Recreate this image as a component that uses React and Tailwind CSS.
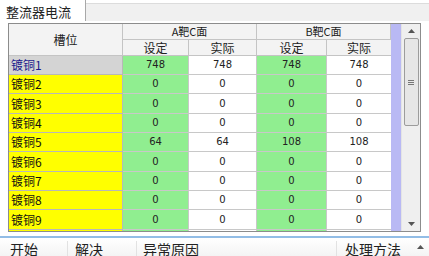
import React from "react";

const rows = [
  { name: "镀铜1", v: ["748", "748", "748", "748"], sel: true, h: "h-[19px]" },
  { name: "镀铜2", v: ["0", "0", "0", "0"], h: "h-[19px]" },
  { name: "镀铜3", v: ["0", "0", "0", "0"], h: "h-[20px]" },
  { name: "镀铜4", v: ["0", "0", "0", "0"], h: "h-[19px]" },
  { name: "镀铜5", v: ["64", "64", "108", "108"], h: "h-[19px]" },
  { name: "镀铜6", v: ["0", "0", "0", "0"], h: "h-[20px]" },
  { name: "镀铜7", v: ["0", "0", "0", "0"], h: "h-[19px]" },
  { name: "镀铜8", v: ["0", "0", "0", "0"], h: "h-[19px]" },
  { name: "镀铜9", v: ["0", "0", "0", "0"], h: "h-[20px]" },
  { name: "", v: ["", "", "", ""], h: "h-[19px]" },
];

const widths = ["w-[66px]", "w-[68px]", "w-[70px]", "w-[64px]"];
const font = { fontFamily: '"DejaVu Sans", "Noto Sans CJK SC", sans-serif' };

export default function App() {
  return (
    <div
      className="w-[429px] h-[256px] bg-white overflow-hidden text-[#222]"
      style={{ fontFamily: '"Noto Sans CJK SC", "DejaVu Sans", sans-serif' }}
    >
      {/* tab strip */}
      <div className="flex h-[21px]">
        <div className="w-[86px] pt-[1px] bg-white border-r border-[#a8a8a8] flex items-center pl-[6px] text-[13px] leading-none">
          整流器电流
        </div>
        <div className="flex-1 mt-[3px] bg-[#f0f0f0] border-t border-[#dcdcdc]" />
      </div>

      {/* table */}
      <div className="ml-[8px] mt-[2px] w-[413px] h-[209px] border border-[#8c8c8c] flex overflow-hidden">
        <div className="flex flex-col w-[382px]">
          {/* header */}
          <div className="flex h-[32px] bg-[#f3f3f3] text-[12px] leading-none">
            <div className="w-[114px] border-r border-b border-[#c4c4c4] flex items-center justify-center">
              槽位
            </div>
            <div className="flex flex-col">
              <div className="flex">
                <div className="w-[134px] h-[16px] border-r border-b border-[#c4c4c4] flex items-center justify-center text-[11px]">
                  A靶C面
                </div>
                <div className="w-[134px] h-[16px] border-r border-b border-[#c4c4c4] flex items-center justify-center text-[11px]">
                  B靶C面
                </div>
              </div>
              <div className="flex">
                {["设定", "实际", "设定", "实际"].map((t, i) => (
                  <div
                    key={i}
                    className={`${widths[i]} h-[16px] border-r border-b border-[#c4c4c4] flex items-center justify-center ${i === 3 ? "border-r-0" : ""}`}
                  >
                    {t}
                  </div>
                ))}
              </div>
            </div>
          </div>
          {/* body */}
          <div className="flex-1 overflow-hidden">
            {rows.map((r, ri) => (
              <div key={ri} className={`flex ${r.h}`}>
                <div
                  className={`w-[114px] border-r border-b border-[#b8b8b8] flex items-center pl-[2px] text-[12px] leading-none ${
                    r.sel ? "bg-[#d4d4d4] text-[#1a1a8c]" : "bg-[#ffff00] text-[#111]"
                  }`}
                >
                  {r.name}
                </div>
                {r.v.map((v, i) => (
                  <div
                    key={i}
                    className={`${widths[i]} border-r border-b border-[#c8c8c8] flex items-center justify-center text-[10px] leading-none ${
                      i % 2 === 0 ? "bg-[#90ee90]" : "bg-white"
                    } ${i === 3 ? "border-r-0" : ""}`}
                    style={font}
                  >
                    {v}
                  </div>
                ))}
              </div>
            ))}
          </div>
        </div>
        {/* lavender column */}
        <div className="w-[10px] bg-[#b9b9f4]" />
        {/* scrollbar */}
        <div className="w-[19px] bg-[#efefef] flex flex-col items-center border-l border-[#e4e4e4]">
          <div className="h-[14px] flex items-center justify-center">
            <svg width="7" height="4" viewBox="0 0 7 4">
              <path d="M3.5 0 L7 4 L0 4 Z" fill="#555" />
            </svg>
          </div>
          <div className="w-[15px] h-[88px] rounded-[2px] border border-[#9c9c9c] bg-[#e6e6e6] flex items-center justify-center">
            <div className="flex flex-col gap-[1px]">
              <div className="w-[6px] h-[1px] bg-[#777]" />
              <div className="w-[6px] h-[1px] bg-[#777]" />
              <div className="w-[6px] h-[1px] bg-[#777]" />
            </div>
          </div>
          <div className="flex-1" />
          <div className="h-[14px] flex items-center justify-center">
            <svg width="7" height="4" viewBox="0 0 7 4">
              <path d="M0 0 L7 0 L3.5 4 Z" fill="#555" />
            </svg>
          </div>
        </div>
      </div>

      {/* bottom grid header */}
      <div className="mt-[4px] h-[2px] bg-[#92bde6]" />
      <div className="flex h-[18px] bg-gradient-to-b from-white to-[#f4f4f4] text-[14px] leading-[16px] pt-[3px] overflow-hidden whitespace-nowrap">
        <div className="w-[68px] pl-[10px] border-r border-[#e2e2e2] overflow-hidden">开始</div>
        <div className="w-[69px] pl-[7px] border-r border-[#e2e2e2] overflow-hidden">解决</div>
        <div className="w-[200px] pl-[6px] border-r border-[#e2e2e2] overflow-hidden">异常原因</div>
        <div className="w-[74px] pl-[8px] overflow-hidden">处理方法</div>
        <div className="flex-1 flex justify-center pt-[4px]">
          <svg width="7" height="4" viewBox="0 0 7 4">
            <path d="M3.5 0 L7 4 L0 4 Z" fill="#555" />
          </svg>
        </div>
      </div>
    </div>
  );
}
